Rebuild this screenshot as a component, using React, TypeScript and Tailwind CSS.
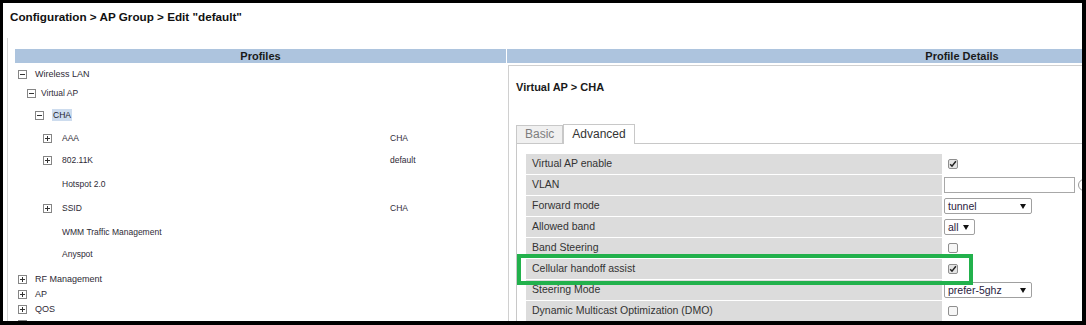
import React from "react";

type TreeItem = {
  label: string;
  level: 0 | 1 | 2 | 3;
  box?: "minus" | "plus";
  value?: string;
  selected?: boolean;
  mt: string;
};

const tree: TreeItem[] = [
  { label: "Wireless LAN", level: 0, box: "minus", mt: "mt-[4px]" },
  { label: "Virtual AP", level: 1, box: "minus", mt: "mt-[5px]" },
  { label: "CHA", level: 2, box: "minus", selected: true, mt: "mt-[8px]" },
  { label: "AAA", level: 3, box: "plus", value: "CHA", mt: "mt-[9px]" },
  { label: "802.11K", level: 3, box: "plus", value: "default", mt: "mt-[8px]" },
  { label: "Hotspot 2.0", level: 3, mt: "mt-[10px]" },
  { label: "SSID", level: 3, box: "plus", value: "CHA", mt: "mt-[10px]" },
  { label: "WMM Traffic Management", level: 3, mt: "mt-[10px]" },
  { label: "Anyspot", level: 3, mt: "mt-[8px]" },
  { label: "RF Management", level: 0, box: "plus", mt: "mt-[11px]" },
  { label: "AP", level: 0, box: "plus", mt: "mt-[1px]" },
  { label: "QOS", level: 0, box: "plus", mt: "mt-[1px]" },
  { label: "", level: 0, box: "plus", mt: "mt-[1px]" },
];

const levelPad: Record<number, string> = {
  0: "pl-[10px]",
  1: "pl-[19px]",
  2: "pl-[27px]",
  3: "pl-[35px]",
};
const levelGap: Record<number, string> = {
  0: "w-[8px]",
  1: "w-[5px]",
  2: "w-[8px]",
  3: "w-[10px]",
};

function TreeBox({ kind }: { kind?: "minus" | "plus" }) {
  if (!kind) return <span className="w-[9px] h-[9px] shrink-0" />;
  return (
    <svg width="9" height="9" viewBox="0 0 9 9" className="shrink-0 block">
      <rect x="0.5" y="0.5" width="8" height="8" fill="#fff" stroke="#858585" />
      <line x1="2" y1="4.5" x2="7" y2="4.5" stroke="#333" />
      {kind === "plus" && <line x1="4.5" y1="2" x2="4.5" y2="7" stroke="#333" />}
    </svg>
  );
}

function TreeRow({ item }: { item: TreeItem }) {
  const size = item.level === 0 ? "text-[9px]" : "text-[8.5px]";
  return (
    <div className={`flex items-center h-[14px] ${item.mt}`}>
      <div className={`flex items-center w-[382px] shrink-0 ${levelPad[item.level]}`}>
        <TreeBox kind={item.box} />
        <span className={`${levelGap[item.level]} shrink-0`} />
        {item.selected ? (
          <span className={`bg-[#cddcee] px-[1px] leading-[12px] text-[#1a1a2a] ${size}`}>{item.label}</span>
        ) : (
          <span className={`leading-[12px] text-[#2e2a36] ${size}`}>{item.label}</span>
        )}
      </div>
      {item.value && <span className="text-[8.5px] leading-[12px] text-[#2e2a36]">{item.value}</span>}
    </div>
  );
}

function Checkbox({ checked }: { checked?: boolean }) {
  return (
    <span
      className={`ml-[4px] w-[10px] h-[10px] rounded-[2px] border border-[#8f8f8f] flex items-center justify-center ${
        checked ? "bg-[#e4e4e4]" : "bg-[#f6f6f6]"
      }`}
    >
      {checked && (
        <svg width="8" height="8" viewBox="0 0 8 8" className="block">
          <path d="M1.2 4.2 L3 6.2 L6.9 1.3" fill="none" stroke="#222" strokeWidth="1.5" />
        </svg>
      )}
    </span>
  );
}

function Select({ value, w }: { value: string; w: string }) {
  return (
    <div
      className={`${w} h-[16px] border border-[#a0a0a0] rounded-[2px] bg-white flex items-center justify-between pl-[3px] pr-[5px] text-[10.5px] leading-none text-[#2a2240]`}
    >
      <span>{value}</span>
      <svg width="6" height="5" viewBox="0 0 6 5" className="block">
        <path d="M0 0 H6 L3 5 Z" fill="#111" />
      </svg>
    </div>
  );
}

type Row = { label: string; value: React.ReactNode };

const rows: Row[] = [
  { label: "Virtual AP enable", value: <Checkbox checked /> },
  {
    label: "VLAN",
    value: (
      <div className="flex items-center">
        <div className="w-[131px] h-[16px] border border-[#a8a8a8] bg-white" />
        <span className="ml-[3px] w-[12px] h-[12px] rounded-full border border-[#999] shrink-0" />
      </div>
    ),
  },
  { label: "Forward mode", value: <Select value="tunnel" w="w-[88px]" /> },
  { label: "Allowed band", value: <Select value="all" w="w-[31px]" /> },
  { label: "Band Steering", value: <Checkbox /> },
  { label: "Cellular handoff assist", value: <Checkbox checked /> },
  { label: "Steering Mode", value: <Select value="prefer-5ghz" w="w-[88px]" /> },
  { label: "Dynamic Multicast Optimization (DMO)", value: <Checkbox /> },
];

export default function App() {
  return (
    <div className="w-[1086px] h-[325px] overflow-hidden bg-white border-solid border-black border-t-[3px] border-l-[3px] border-r-[4px] border-b-[4px] font-['Liberation_Sans',Arial,sans-serif] text-[#333]">
      <div className="h-[35px] pl-[7px] pt-[7px] text-[11.7px] leading-[14px] font-bold text-[#111]">
        Configuration &gt; AP Group &gt; Edit "default"
      </div>
      <div className="flex pl-[4px]">
        {/* Profiles */}
        <div className="w-[500px] shrink-0 h-[300px] border-l border-[#d6d6d6] pt-[11px] pr-[1px]">
          <div className="ml-[7px] h-[14px] bg-[#adc4de] flex items-center justify-center text-[11px] font-bold text-[#1a1a1a]">
            Profiles
          </div>
          <div className="flex flex-col">
            {tree.map((t, i) => (
              <TreeRow key={i} item={t} />
            ))}
          </div>
        </div>

        {/* Profile Details */}
        <div className="w-[910px] shrink-0 pt-[11px]">
          <div className="h-[14px] bg-[#adc4de] flex items-center justify-center text-[11px] font-bold text-[#1a1a1a]">
            Profile Details
          </div>
          <div className="mt-[2px] ml-[1px] border-t border-l border-[#d0d0d0] h-[300px]">
            <div className="pl-[7px] pt-[14px] text-[11px] leading-[14px] font-bold text-[#1a1a1a]">
              Virtual AP &gt; CHA
            </div>
            <div className="ml-[7px] mt-[30px]">
              <div className="flex items-end h-[20px] border-b border-[#c8c8c8]">
                <div className="h-[18px] border border-b-0 border-[#c8c8c8] bg-[#f0f0f0] px-[8px] text-[12px] leading-[17px] text-[#7d7d7d]">
                  Basic
                </div>
                <div className="h-[20px] -mb-px border border-b-0 border-[#c8c8c8] bg-white px-[8px] text-[12px] leading-[19px] text-[#333]">
                  Advanced
                </div>
              </div>
              <div className="relative border-l border-[#c8c8c8] pl-[9px] pt-[10px] h-[200px]">
                <div className="flex flex-col gap-[1px]">
                  {rows.map((r) => (
                    <div key={r.label} className="flex items-center h-[20px]">
                      <div className="w-[416px] h-[20px] shrink-0 bg-[#dcdcdc] pl-[6px] flex items-center text-[10.5px] text-[#333]">
                        {r.label}
                      </div>
                      <div className="ml-[2px] flex items-center">{r.value}</div>
                    </div>
                  ))}
                </div>
                <div className="absolute left-0 top-[110px] w-[456px] h-[31px] border-[4px] border-[#22b14c]" />
              </div>
            </div>
          </div>
        </div>
      </div>
    </div>
  );
}
